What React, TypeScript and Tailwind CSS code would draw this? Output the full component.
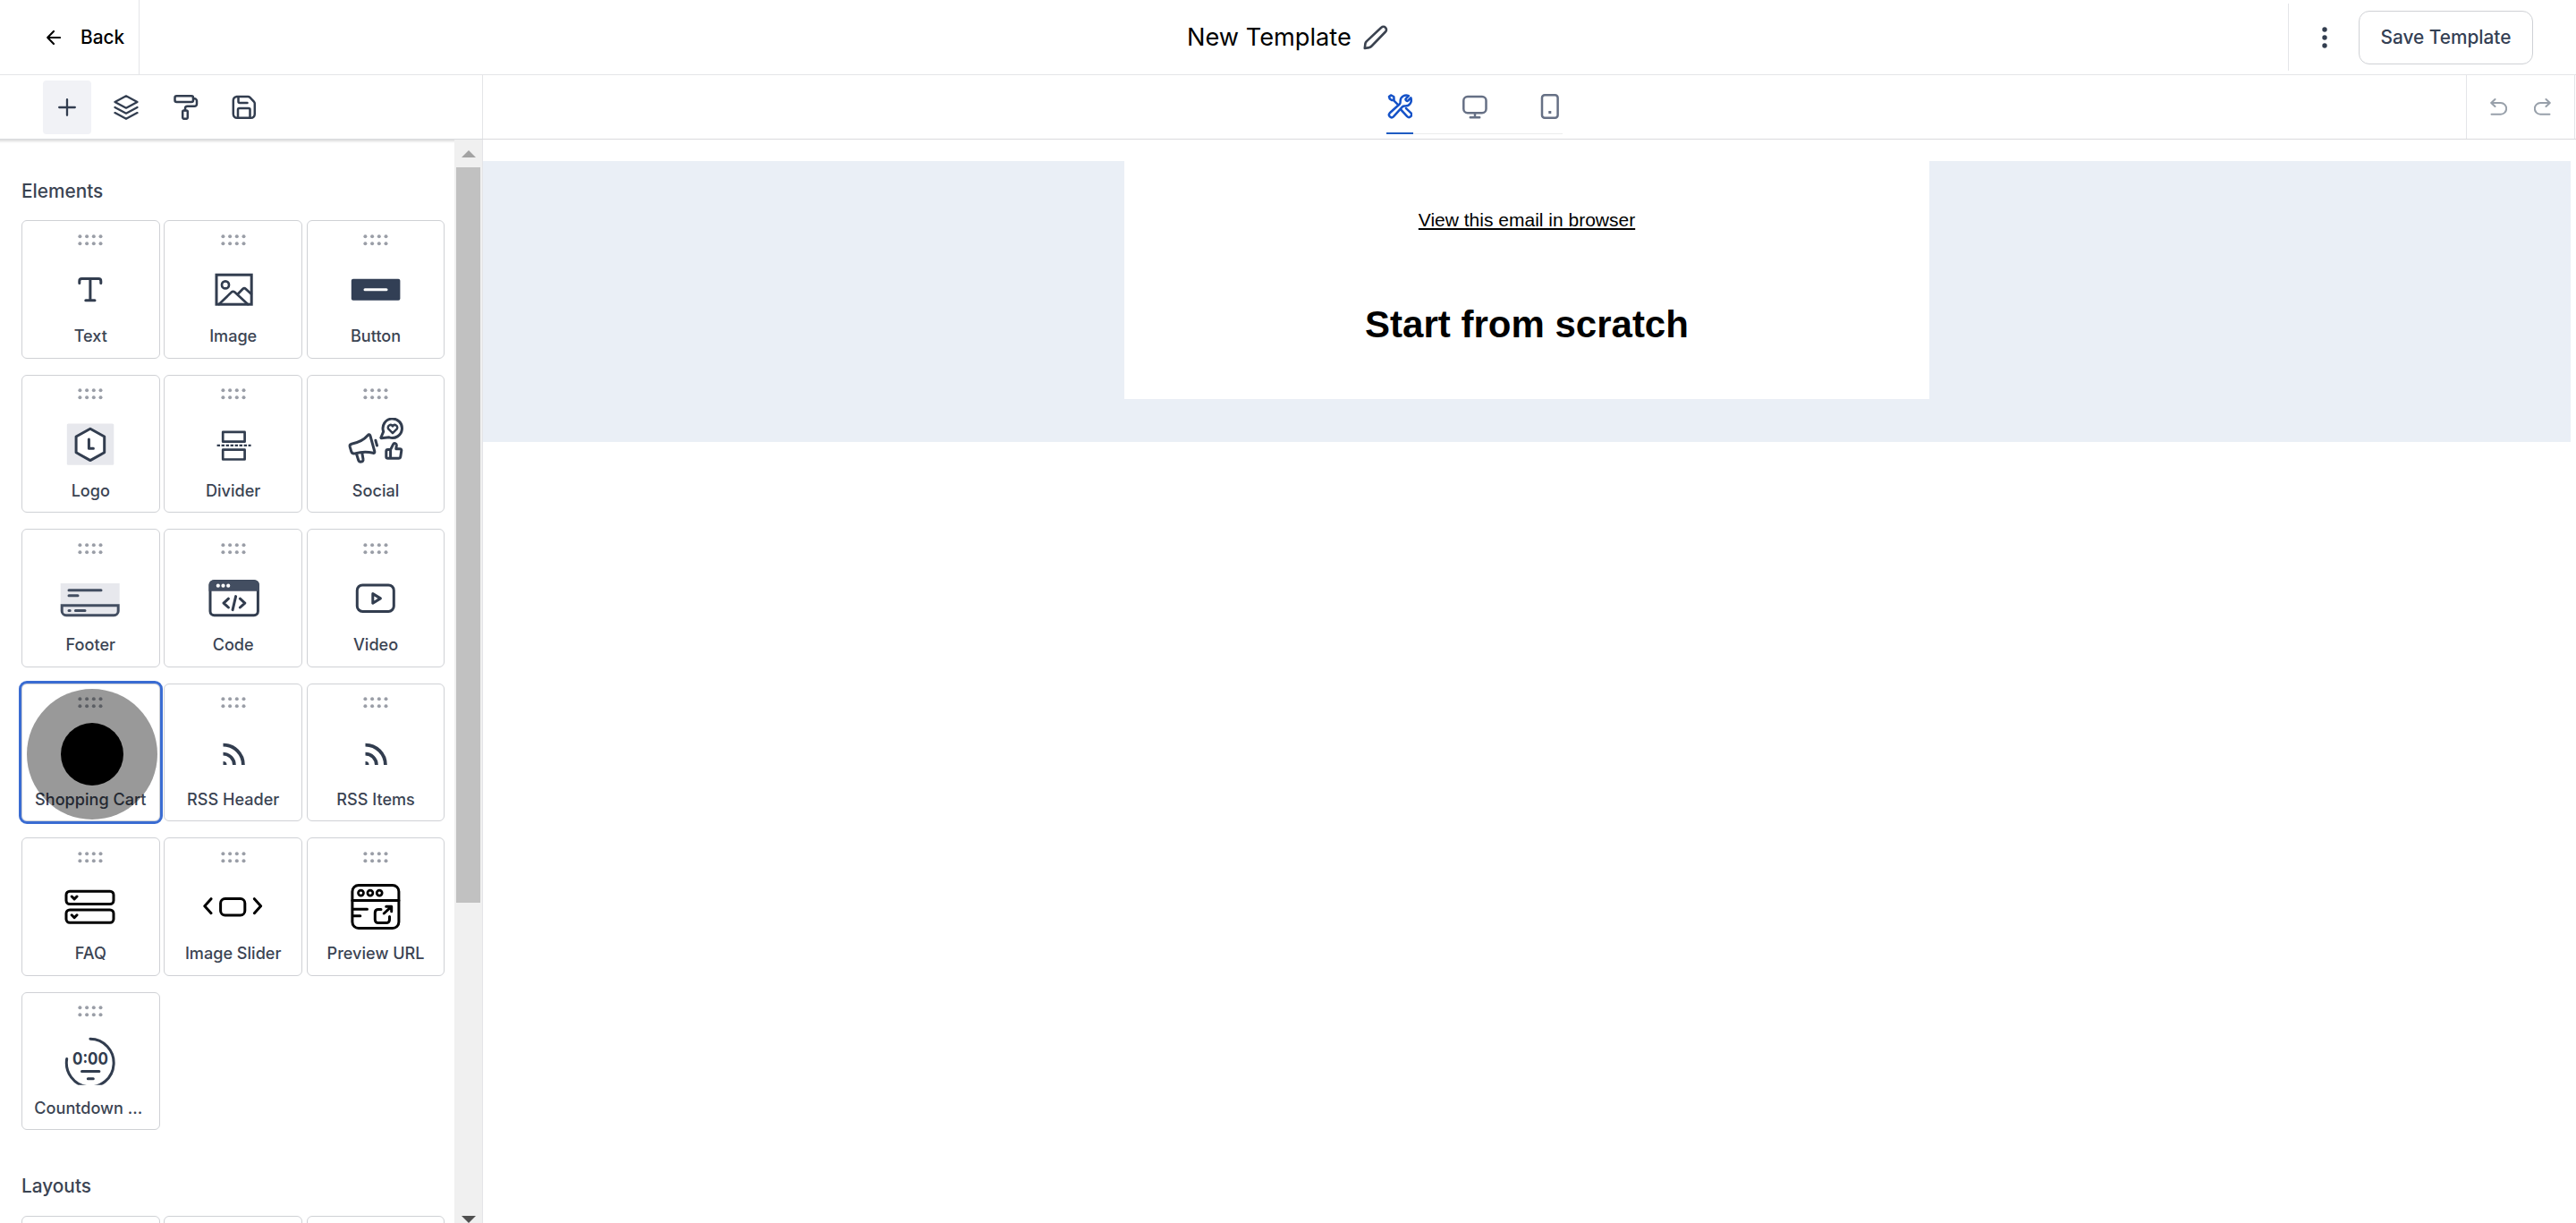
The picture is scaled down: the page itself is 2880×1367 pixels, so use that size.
import type { ReactNode } from 'react';

const stroke = {
  fill: 'none',
  stroke: 'currentColor',
  strokeWidth: 3,
  strokeLinecap: 'round' as const,
  strokeLinejoin: 'round' as const,
};

function Glyph({ children, className = 'text-[#323d4f]' }: { children?: ReactNode; className?: string }) {
  return (
    <svg viewBox="0 0 90 60" className={`h-[60px] w-[90px] shrink-0 ${className}`} {...stroke}>
      {children}
    </svg>
  );
}

const RssGlyph = () => (
  <Glyph>
    <g strokeLinecap="butt" strokeWidth="3.8">
      <path d="M33.5 20.6a22.4 22.4 0 0 1 22.4 22.4" />
      <path d="M33.5 30.6a12.4 12.4 0 0 1 12.4 12.4" />
    </g>
    <path d="M33.5 39a4 4 0 0 1 4 4h-4z" fill="currentColor" stroke="none" />
  </Glyph>
);

const elements: { label: string; icon: ReactNode; selected?: boolean }[] = [
  {
    label: 'Text',
    icon: (
      <Glyph>
        <path d="M32.8 22.4v-2.2a2.6 2.6 0 0 1 2.6-2.6h18.8a2.6 2.6 0 0 1 2.6 2.6v2.2M44.9 17.6v24M39.8 41.7h10.2" />
      </Glyph>
    ),
  },
  {
    label: 'Image',
    icon: (
      <Glyph>
        <g strokeLinejoin="miter">
          <rect x="26" y="13.2" width="39.2" height="33" />
        </g>
        <g strokeWidth="2.7">
          <circle cx="36" cy="24.4" r="4" />
          <path d="M28.9 46 42.8 32.6q1.8-1.6 3.6 0L61 46M49.6 35l5.8-6q1.7-1.6 3.4 0l6 5.6" />
        </g>
      </Glyph>
    ),
  },
  {
    label: 'Button',
    icon: (
      <Glyph>
        <rect x="17.8" y="17.7" width="54.6" height="24" rx="2" fill="#323f55" stroke="none" />
        <path d="M33 29.8h24" stroke="#fff" />
      </Glyph>
    ),
  },
  {
    label: 'Logo',
    icon: (
      <Glyph>
        <rect x="18.8" y="6.4" width="52.5" height="46.3" rx="1.5" fill="#e7e8ed" stroke="none" />
        <path d="m44.9 12.2 15.8 8.8v17.8l-15.8 8.8-15.8-8.8V21z" fill="#fff" />
        <path d="M43.4 24v10.3h5" />
      </Glyph>
    ),
  },
  {
    label: 'Divider',
    icon: (
      <Glyph>
        <g strokeWidth="2.7">
          <rect x="33.2" y="15.9" width="24.4" height="10.8" />
          <rect x="33.2" y="35.7" width="24.4" height="10.8" />
        </g>
        <path d="M26.6 30.9h38" strokeLinecap="butt" strokeWidth="2.2" strokeDasharray="3.4 1.6" />
      </Glyph>
    ),
  },
  {
    label: 'Social',
    icon: (
      <Glyph>
        <path d="M18 29.2c8-1.6 14.200-4.800 18.300-9.700c.9-1.200 2.200-.9 2.600.4l4.900 17.600c.4 1.400-.4 2.200-1.800 1.800c-7-1.700-13.400-1.300-20.200.6c-1.900.4-3.300-.2-4-2.100l-1.600-5.500c-.4-1.700.2-2.700 1.800-3.100z" />
        <path d="m23.500 40.200 2.200 7c1 3 6 2.400 5.300-1l-1.200-7M44.900 25.200l1.600 5.800" />
        <path d="M53.700 15.400a10.700 10.700 0 1 1 6.400 6.400l-8.600.9c-.6 0-.8-.5-.4-1z" />
        <path d="M64 17.200 59.200 12.400a2.700 2.700 0 0 1 4.800-3a2.700 2.700 0 0 1 4.800 3z" strokeWidth="2.5" />
        <path d="M58.700 35.600h2.900l3-6c.9-1.900 3.900-1.200 3.700 1.300l-.5 3.800h4.200c1.300 0 2 .8 1.800 2l-1 6.700c-.2 1.200-1 1.900-2.200 1.900H58.700c-1.200 0-1.900-.7-1.900-1.800v-6c0-1.200.7-1.900 1.900-1.900zM61.600 35.600v9.700" />
      </Glyph>
    ),
  },
  {
    label: 'Footer',
    icon: (
      <Glyph className="text-[#434e61]">
        <rect x="11.7" y="13" width="66" height="24" fill="#e7e8ed" stroke="none" />
        <path d="M13.2 37.7h63v6.2a4.800 4.800 0 0 1-4.800 4.800H18a4.800 4.800 0 0 1-4.800-4.800z" fill="#e7e8ed" strokeLinejoin="miter" />
        <path d="M21 20.7h36M21 26.7h10M21 43.4h1.2M28.4 43.4h10.6" />
      </Glyph>
    ),
  },
  {
    label: 'Code',
    icon: (
      <Glyph>
        <rect x="19" y="10.5" width="53.4" height="38.2" rx="4.5" />
        <path d="M17.5 21.7v-7a5.500 5.500 0 0 1 5.500-5.500h45.400a5.500 5.500 0 0 1 5.500 5.500v7z" fill="#434e61" stroke="none" />
        <g fill="#fff" stroke="none">
          <circle cx="27.8" cy="15.7" r="2.1" />
          <circle cx="33.5" cy="15.7" r="2.1" />
          <circle cx="39.2" cy="15.7" r="2.1" />
        </g>
        <path d="m39.4 30.2-5.4 4.9 5.4 4.9M52.4 30.2l5.4 4.9-5.4 4.9M47.6 27.6l-3.5 15" />
      </Glyph>
    ),
  },
  {
    label: 'Video',
    icon: (
      <Glyph>
        <rect x="24.3" y="14.9" width="41" height="29.5" rx="6" />
        <path d="m41.8 24.6 8.6 5.3-8.6 5.3z" />
      </Glyph>
    ),
  },
  { label: 'Shopping Cart', icon: <Glyph />, selected: true },
  { label: 'RSS Header', icon: <RssGlyph /> },
  { label: 'RSS Items', icon: <RssGlyph /> },
  {
    label: 'FAQ',
    icon: (
      <Glyph className="text-black">
        <rect x="18" y="12.2" width="53" height="14.3" rx="4" />
        <rect x="18" y="33" width="53" height="14.3" rx="4" />
        <path d="m24.2 18 2.900 2.900 2.900-2.900M24.2 38.8l2.900 2.900 2.900-2.900" />
      </Glyph>
    ),
  },
  {
    label: 'Image Slider',
    icon: (
      <Glyph className="text-black">
        <path d="m20 20.7-7.200 8 7.200 8M68.4 20.7l7.200 8-7.200 8" />
        <rect x="30.6" y="20.5" width="27.2" height="18.4" rx="5" />
      </Glyph>
    ),
  },
  {
    label: 'Preview URL',
    icon: (
      <Glyph className="text-black">
        <rect x="18.9" y="5.5" width="52" height="48" rx="7" />
        <path d="M18.9 22.6h52M20 32.3h15.5M20 39.7h7.8" />
        <g strokeWidth="2.7">
          <circle cx="28.5" cy="14.1" r="3" />
          <circle cx="38.9" cy="14.1" r="3" />
          <circle cx="49.2" cy="14.1" r="3" />
        </g>
        <path d="M51 32.4h-3.200a3.500 3.500 0 0 0-3.500 3.500v8.200a3.500 3.500 0 0 0 3.500 3.500H57a3.500 3.500 0 0 0 3.500-3.500v-3.600M54.3 37l8.300-7.700M56.7 29.2h6v5.500" />
      </Glyph>
    ),
  },
  {
    label: 'Countdown ...',
    icon: (
      <Glyph>
        <clipPath id="countdown">
          <rect width="90" height="55.7" />
        </clipPath>
        <g clipPath="url(#countdown)">
          <path d="M44.9 4.2a26.400 26.800 0 1 1-26.200 22.400" />
          <path d="M35.5 40.5h19.4M42.3 48.7h6" />
          <text
            x="45"
            y="32.5"
            textAnchor="middle"
            textLength="40"
            lengthAdjust="spacingAndGlyphs"
            fill="currentColor"
            stroke="none"
            className="font-[Inter] text-[19px] font-bold"
          >
            0:00
          </text>
        </g>
      </Glyph>
    ),
  },
];

function DragDots() {
  return (
    <svg viewBox="0 0 28 13" className="mt-[14.5px] h-[13px] w-7 shrink-0" fill="#9a9ea7">
      {[2.4, 10.1, 17.8, 25.5].map((x) => (
        <g key={x}>
          <circle cx={x} cy="2.2" r="2" />
          <circle cx={x} cy="10.3" r="2" />
        </g>
      ))}
    </svg>
  );
}

function ElementCard({ label, icon, selected }: { label: string; icon: ReactNode; selected?: boolean }) {
  return (
    <div
      className={`relative flex h-[154.5px] flex-col items-center rounded-md border border-[#cfd1d5] bg-white ${
        selected ? 'outline-3 outline-[#3a6cd2]' : ''
      }`}
    >
      <DragDots />
      <div className="mt-[19.5px]">{icon}</div>
      <span
        className={`mt-2 text-[18.1px] leading-[27px] font-[450] whitespace-nowrap ${
          label.endsWith('...') ? 'pr-[5px]' : ''
        }`}
      >
        {label}
      </span>
      {selected && (
        <div className="absolute top-[5px] left-[5px] flex size-[146px] items-center justify-center rounded-full bg-black/40">
          <div className="size-[70px] rounded-full bg-black" />
        </div>
      )}
    </div>
  );
}

function Sidebar() {
  return (
    <aside className="flex w-[540px] shrink-0 border-r border-[#e4e5e8]">
      <div className="w-[508px] overflow-hidden pl-6 shadow-[inset_0_5px_3px_-3px_rgba(0,0,0,0.14)]">
        <h2 className="mt-[43px] text-[20.8px] leading-[30px] font-[450]">Elements</h2>
        <div className="mt-[17px] grid w-[473.4px] grid-cols-3 gap-x-[4.8px] gap-y-[18.1px]">
          {elements.map((e) => (
            <ElementCard key={e.label} {...e} />
          ))}
        </div>
        <h2 className="mt-[48px] text-[20.8px] leading-[30px] font-[450]">Layouts</h2>
        <div className="mt-[18px] grid w-[473.4px] grid-cols-3 gap-x-[4.8px]">
          {[0, 1, 2].map((i) => (
            <div key={i} className="h-[155px] rounded-md border border-[#cfd1d5]" />
          ))}
        </div>
      </div>
      {/* Scrollbar */}
      <div className="flex w-[31px] flex-col items-center bg-[#f0f0f0]">
        <svg viewBox="0 0 16 8" className="mt-3 h-2 w-4 shrink-0" fill="#a3a3a3">
          <path d="M0 8 8 0l8 8z" />
        </svg>
        <div className="mt-[11px] h-[822px] w-[27px] shrink-0 bg-[#c1c1c1]" />
        <svg viewBox="0 0 16 8" className="mt-auto h-2 w-4 shrink-0" fill="#505050">
          <path d="M0 0h16L8 8z" />
        </svg>
      </div>
    </aside>
  );
}

function Header() {
  return (
    <header className="flex h-[84px] shrink-0 items-center border-b border-[#e4e5e8] text-black">
      <button className="flex h-full w-[156px] items-center border-r border-[#e4e5e8] pl-[52px]">
        <svg viewBox="0 0 16 16" className="size-4" {...stroke} strokeWidth="2.1">
          <path d="M15 8H1.200M8 1 1.200 8 8 15" />
        </svg>
        <span className="ml-[22px] text-[20.8px] leading-[30px] font-medium">Back</span>
      </button>
      <div className="flex flex-1 items-center pl-[1171px]">
        <h1 className="w-[182px] text-[27.2px] leading-10 font-[370] whitespace-nowrap">New Template</h1>
        <svg viewBox="0 0 28 28" className="ml-[14.5px] size-7 text-[#3b4350]" {...stroke} strokeWidth="2.6">
          <path d="M20.3 2.8a3.300 3.300 0 0 1 4.700 0 3.300 3.300 0 0 1 0 4.700L9.500 23.500c-.8.800-1.500 1.300-2.600 1.600L1.800 26l.6-5.200c.2-1.100.7-1.900 1.500-2.700z" />
        </svg>
      </div>
      <div className="flex h-full items-center pr-[48px]">
        <div className="h-[75px] w-px bg-[#e4e5e8]" />
        <svg viewBox="0 0 6 24" className="ml-[37px] h-6 w-1.5 text-[#323d4f]" fill="currentColor">
          <circle cx="3" cy="3" r="2.7" />
          <circle cx="3" cy="12" r="2.7" />
          <circle cx="3" cy="21" r="2.7" />
        </svg>
        <button className="ml-[35px] h-[60px] w-[195px] rounded-xl border border-[#cfd1d5] text-[20.8px] font-[450] text-[#344054]">
          Save Template
        </button>
      </div>
    </header>
  );
}

function Toolbar() {
  return (
    <div className="flex h-[72px] shrink-0 border-b border-[#d9dadd]">
      <div className="flex w-[540px] shrink-0 items-center border-r border-[#e4e5e8] pl-[48px] text-[#323d4f]">
        <div className="flex h-[60px] w-[54px] items-center justify-center rounded bg-[#f1f2f6]">
          <svg viewBox="0 0 20 20" className="size-5" {...stroke} strokeWidth="2.3">
            <path d="M10 1.200v17.600M1.200 10h17.600" />
          </svg>
        </div>
        <svg viewBox="0 0 28 28" className="ml-[25px] size-7" {...stroke} strokeWidth="2.3">
          <path d="M14 1.300 26.500 7.900 14 14.700 1.500 7.900zM1.500 14 14 20.700 26.500 14M1.500 20.100 14 26.800l12.500-6.700" />
        </svg>
        <svg viewBox="0 0 28 28" className="ml-[39px] size-7" {...stroke} strokeWidth="2.5">
          <rect x="1.5" y="1.3" width="20.5" height="6.7" rx="2" />
          <path d="M22 4.300h1.500a2.500 2.500 0 0 1 2.500 2.500v3.500a2.500 2.500 0 0 1-2.500 2.500h-8a2.500 2.500 0 0 0-2.500 2.500v2" />
          <rect x="10.2" y="17.5" width="5.6" height="9.3" rx="1.5" />
        </svg>
        <svg viewBox="0 0 28 28" className="ml-[37px] size-7" {...stroke} strokeWidth="2.5">
          <path d="M5.500 2h12.700q1.300 0 2.200.9l4.500 4.700q.9.900.9 2.200v11.800a4.200 4.200 0 0 1-4.200 4.200H6a4.200 4.200 0 0 1-4.200-4.200V6.200A4.200 4.200 0 0 1 6 2M7.500 2.500v5q0 1.500 1.500 1.500h8.500M7 25.500v-9q0-1.500 1.500-1.500h10.500q1.500 0 1.500 1.500v9" />
        </svg>
      </div>
      <div className="flex flex-1 pl-[1010px]">
        <div className="flex h-[66px] w-[197px] items-end justify-between border-b border-[#eceded] text-[#667085]">
          <div className="-mb-px flex h-[56px] w-[30px] justify-center border-b-2 border-[#1f5cc2] pt-[10.5px] text-[#1552c8]">
            <svg viewBox="0 0 28 28" className="size-7" {...stroke} strokeWidth="2.5">
              <path d="m6.800 6.800 5.500 5.500M2 3l2-1.600L7.300 3l.3 3.500L5 7 2.800 5.500z" />
              <path d="m15.500 17.800 6.700 7.400a2.900 2.900 0 0 0 4.100-4.100l-5.300-5" />
              <path d="M20.900 7.100c-.6-.6-.6-1.400 0-2l3-3c-4.300-1.800-9.300 1-9.300 6 0 1.600.2 2.300-.7 3.200l-11.100 10a2.900 2.900 0 0 0 4.100 4.100l10-11.100c.9-.9 1.700-.7 3.200-.7 5.100 0 7.900-4.800 6.200-9.300l-3 3c-.6.600-1.400.6-2 0z" />
            </svg>
          </div>
          <svg viewBox="0 0 30 28" className="mb-4 h-7 w-[30px]" {...stroke} strokeWidth="2.5">
            <rect x="2.3" y="3" width="25.2" height="18.3" rx="4.5" />
            <path d="M15 21.300v4.700M9.800 26.200h10.400" />
          </svg>
          <svg viewBox="0 0 30 28" className="mb-4 h-7 w-[30px]" {...stroke} strokeWidth="2.5">
            <rect x="7" y="1.3" width="17.6" height="25.4" rx="3" />
            <rect x="14.3" y="19" width="3" height="3" fill="currentColor" stroke="none" />
          </svg>
        </div>
      </div>
      <div className="flex w-[122px] items-center justify-between border-x border-[#e4e5e8] pr-[26.5px] pl-[25.5px] text-[#98a0aa]">
        <svg viewBox="0 0 19 19" className="size-[19px]" {...stroke} strokeWidth="2">
          <path d="M5.500 1 1.200 5 5.500 9M1.500 5h10.300a6.300 6.300 0 0 1 0 12.700H1.500" />
        </svg>
        <svg viewBox="0 0 19 19" className="size-[19px]" {...stroke} strokeWidth="2">
          <path d="M13.500 1l4.300 4-4.300 4M17.500 5H7.200a6.300 6.300 0 0 0 0 12.700h10.300" />
        </svg>
      </div>
      <div className="w-px" />
    </div>
  );
}

function Canvas() {
  return (
    <main className="flex-1 pt-6 pr-[6px] font-['Liberation_Sans',Arial,sans-serif] text-black">
      <div className="h-[314px] bg-[#eaeff6]">
        <div className="mx-auto flex h-[266px] w-[900px] flex-col items-center bg-white">
          <a className="mt-[53px] text-[21px] leading-[26px] underline decoration-2 underline-offset-2">
            View this email in browser
          </a>
          <h2 className="mt-[79px] text-[42px] leading-[50px] font-bold">Start from scratch</h2>
        </div>
      </div>
    </main>
  );
}

export default function App() {
  return (
    <div className="flex h-screen flex-col overflow-hidden bg-white font-['Inter',sans-serif] text-[#3b4453]">
      <Header />
      <Toolbar />
      <div className="flex min-h-0 flex-1">
        <Sidebar />
        <Canvas />
      </div>
    </div>
  );
}
